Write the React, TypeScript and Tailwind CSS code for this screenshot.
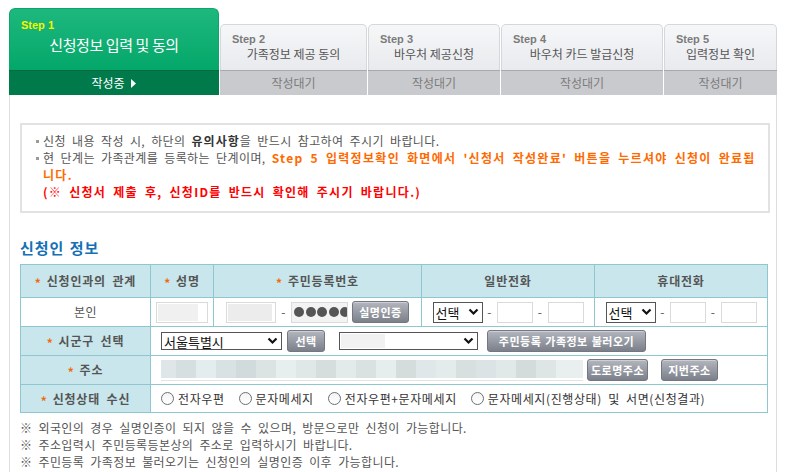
import React from "react";

const FONT = { fontFamily: '"Noto Sans CJK KR", "Noto Sans", sans-serif' };
const LATIN = { fontFamily: '"Liberation Sans", Arial, sans-serif' };

function Btn({ children, className = "" }: { children: React.ReactNode; className?: string }) {
  return (
    <span
      className={`inline-flex items-center justify-center rounded-[3px] border border-[#737780] bg-linear-to-b from-[#b3b6be] to-[#7c808a] text-white text-[11px] font-bold leading-none tracking-[0.5px] [word-spacing:1px] shadow-[inset_0_1px_0_rgba(255,255,255,0.35)] ${className}`}
    >
      {children}
    </span>
  );
}

function Chev() {
  return (
    <svg width="11" height="8" viewBox="0 0 11 8" className="shrink-0">
      <polyline points="1.5,1.5 5.5,5.5 9.5,1.5" fill="none" stroke="#111" strokeWidth="2.2" />
    </svg>
  );
}

function Sel({ text, className = "" }: { text: string; className?: string }) {
  return (
    <span
      className={`inline-flex items-center justify-between border border-[#555] bg-white pl-[2px] pr-[3px] text-[13px] leading-none text-[#111] tracking-normal ${className}`}
    >
      <span>{text}</span>
      <Chev />
    </span>
  );
}

function Inp({ className = "", children }: { className?: string; children?: React.ReactNode }) {
  return (
    <span className={`inline-flex items-center border border-[#dadada] bg-white overflow-hidden ${className}`}>
      {children}
    </span>
  );
}

function Star() {
  return <span className="text-[#f26a10] font-bold mr-[5px] relative top-[2px]">*</span>;
}

function Radio({ label }: { label: string }) {
  return (
    <span className="inline-flex items-center">
      <span className="w-[13px] h-[13px] rounded-full border border-[#6f6f6f] bg-linear-to-b from-[#f4f4f4] to-white" />
      <span className="ml-[4px] text-[12px] text-[#333] tracking-[0.6px]">{label}</span>
    </span>
  );
}

const mosaic: [number, string][] = [
  [15, "#dfe6e7"], [20, "#d6dfe0"], [20, "#e4eded"], [20, "#d9e2e2"], [20, "#d2dbdc"],
  [20, "#dbe3e3"], [20, "#e6eeee"], [20, "#dfe7e7"], [20, "#d5dddd"], [20, "#e2eaea"],
  [20, "#d9e1e1"], [20, "#e5eded"], [20, "#d4dcdc"], [20, "#dfe7e8"], [20, "#e3ebeb"],
  [20, "#d7dfdf"], [20, "#dbe3e4"], [20, "#e0e8e8"], [20, "#d3dbdb"], [20, "#dde5e5"], [27, "#e9efef"],
];

function Tab({
  step,
  title,
  w,
  active = false,
}: {
  step: string;
  title: string;
  w: string;
  active?: boolean;
}) {
  if (active) {
    return (
      <div className={`flex flex-col ${w}`}>
        <div className="h-[62px] rounded-t-[6px] border border-[#0ea56c] border-b-0 bg-linear-to-b from-[#1cb87e] to-[#03a769] pl-[11px] pt-[10px]">
          <div style={LATIN} className="text-[11px] font-bold leading-[13px] text-[#f5f500]">
            {step}
          </div>
          <div className="mt-[3px] pr-[11px] text-center text-[15px] leading-[20px] text-white tracking-[-0.4px]">
            {title}
          </div>
        </div>
        <div className="h-[25px] border-t border-[#00683f] bg-[#007a4b] flex items-center justify-center text-[12px] text-white">
          작성중
          <svg width="6" height="9" viewBox="0 0 6 9" className="ml-[6px]">
            <polygon points="0,0 5,4.5 0,9" fill="#fff" />
          </svg>
        </div>
      </div>
    );
  }
  return (
    <div className={`flex flex-col ${w}`}>
      <div className="h-[46px] rounded-t-[5px] border border-[#d6d7da] border-b-0 bg-linear-to-b from-[#f6f7f9] to-[#e9eaed] pl-[11px] pt-[8px]">
        <div style={LATIN} className="text-[11px] font-bold leading-[13px] text-[#7b7b7b]">
          {step}
        </div>
        <div className="pr-[11px] text-center text-[12px] leading-[16px] text-[#555]">{title}</div>
      </div>
      <div className="h-[25px] border-t border-[#a8a9ad] bg-[#c9cace] flex items-center justify-center text-[12px] text-[#7c7c7c]">
        작성대기
      </div>
    </div>
  );
}

function Dots() {
  return (
    <span className="flex items-center gap-[1.5px] pl-[2px]">
      {[0, 1, 2, 3, 4].map((i) => (
        <span key={i} className="w-[10px] h-[10px] rounded-full bg-[#555] shrink-0" />
      ))}
    </span>
  );
}

export default function App() {
  const th = "border border-[#8fc7d0] bg-[#c8e6ec] text-[12px] font-bold text-[#555] tracking-[0.8px] text-center p-0";
  const td = "border border-[#8fc7d0] bg-white p-0";
  const lab = "border border-[#8fc7d0] bg-[#c8e6ec] text-[12px] font-bold text-[#555] tracking-[0.8px] text-center p-0";
  return (
    <div style={FONT} className="w-[785px] h-[472px] overflow-hidden bg-white">
      {/* tabs */}
      <div className="flex items-end gap-[1px] pl-[9px] pt-[8px]">
        <Tab step="Step 1" title="신청정보 입력 및 동의" w="w-[210px]" active />
        <Tab step="Step 2" title="가족정보 제공 동의" w="w-[147px]" />
        <Tab step="Step 3" title="바우처 제공신청" w="w-[132px]" />
        <Tab step="Step 4" title="바우처 카드 발급신청" w="w-[162px]" />
        <Tab step="Step 5" title="입력정보 확인" w="w-[113px]" />
      </div>

      {/* content */}
      <div className="ml-[9px] w-[768px] h-[377px] border-l border-r border-[#dedede] pl-[10px] pt-[28px] tracking-[0.4px] [word-spacing:3px]">
        <div className="w-[750px] border-2 border-[#e2e2e2] pl-[14px] pt-[7px] pb-[11px] text-[12px] leading-[17px] text-[#555] whitespace-nowrap">
          <div className="flex">
            <span className="w-[3px] h-[3px] bg-[#9a9a9a] mt-[8px] mr-[4px] shrink-0" />
            <span>
              신청 내용 작성 시, 하단의 <b className="text-[#333] tracking-[1px]">유의사항</b>을 반드시 참고하여 주시기 바랍니다.
            </span>
          </div>
          <div className="flex">
            <span className="w-[3px] h-[3px] bg-[#9a9a9a] mt-[8px] mr-[4px] shrink-0" />
            <span>
              현 단계는 가족관계를 등록하는 단계이며,{" "}
              <b className="text-[#ff6a00] tracking-[1.3px]">
                Step 5 입력정보확인 화면에서 '신청서 작성완료' 버튼을 누르셔야 신청이 완료됩
                <br />
                니다.
              </b>
              <br />
              <b className="text-[#ff0000] tracking-[1.3px]">(※ 신청서 제출 후, 신청ID를 반드시 확인해 주시기 바랍니다.)</b>
            </span>
          </div>
        </div>

        <div className="mt-[25px] mb-[6px] text-[15px] leading-[20px] font-bold text-[#1670b5] tracking-[1px] [word-spacing:1px]">
          신청인 정보
        </div>

        <table className="w-[747px] table-fixed border-collapse">
          <colgroup>
            <col className="w-[130px]" />
            <col className="w-[63px]" />
            <col className="w-[208px]" />
            <col className="w-[173px]" />
            <col className="w-[173px]" />
          </colgroup>
          <tbody>
            <tr className="h-[33px]">
              <th className={th}>
                <Star />신청인과의 관계
              </th>
              <th className={th}>
                <Star />성명
              </th>
              <th className={th}>
                <Star />주민등록번호
              </th>
              <th className={th}>일반전화</th>
              <th className={th}>휴대전화</th>
            </tr>
            <tr className="h-[29px]">
              <td className={`${td} text-center text-[12px] text-[#555]`}>본인</td>
              <td className={td}>
                <div className="pl-[5px] flex items-center">
                  <Inp className="w-[52px] h-[21px]">
                    <span className="ml-[1px] w-[40px] h-[17px] bg-[#f0f0f0]" />
                  </Inp>
                </div>
              </td>
              <td className={td}>
                <div className="flex items-center justify-center">
                  <Inp className="w-[50px] h-[21px]">
                    <span className="ml-[1px] w-[44px] h-[17px] bg-[#ececec]" />
                  </Inp>
                  <span className="w-[15px] text-center text-[12px] text-[#555]">-</span>
                  <Inp className="w-[57px] h-[21px] !bg-[#f3f3f3]">
                    <Dots />
                  </Inp>
                  <Btn className="ml-[4px] w-[57px] h-[22px]">실명인증</Btn>
                </div>
              </td>
              <td className={td}>
                <div className="flex items-center justify-center">
                  <Sel text="선택" className="w-[50px] h-[21px]" />
                  <span className="w-[14px] text-center text-[12px] text-[#555]">-</span>
                  <Inp className="w-[36px] h-[21px]" />
                  <span className="w-[15px] text-center text-[12px] text-[#555]">-</span>
                  <Inp className="w-[36px] h-[21px]" />
                </div>
              </td>
              <td className={td}>
                <div className="flex items-center justify-center">
                  <Sel text="선택" className="w-[50px] h-[21px]" />
                  <span className="w-[14px] text-center text-[12px] text-[#555]">-</span>
                  <Inp className="w-[36px] h-[21px]" />
                  <span className="w-[15px] text-center text-[12px] text-[#555]">-</span>
                  <Inp className="w-[36px] h-[21px]" />
                </div>
              </td>
            </tr>
            <tr className="h-[29px]">
              <td className={lab}>
                <Star />시군구 선택
              </td>
              <td className={td} colSpan={4}>
                <div className="pl-[10px] flex items-center">
                  <Sel text="서울특별시" className="w-[121px] h-[18px]" />
                  <Btn className="ml-[5px] w-[38px] h-[22px]">선택</Btn>
                  <span className="ml-[14px] w-[139px] h-[18px] border border-[#555] flex items-center justify-between pr-[3px]">
                    <span className="ml-[1px] w-[44px] h-[14px] bg-[#f1f1f1]" />
                    <Chev />
                  </span>
                  <Btn className="ml-[9px] w-[159px] h-[22px]">주민등록 가족정보 불러오기</Btn>
                </div>
              </td>
            </tr>
            <tr className="h-[29px]">
              <td className={lab}>
                <Star />주소
              </td>
              <td className={td} colSpan={4}>
                <div className="pl-[10px] flex items-center">
                  <span className="w-[422px] h-[21px] flex flex-col border-b border-[#e3e3e3]">
                    <span className="flex h-[18px] overflow-hidden">
                      {mosaic.map(([w, c], i) => (
                        <span key={i} className="h-full shrink-0" style={{ width: w, background: c }} />
                      ))}
                    </span>
                  </span>
                  <Btn className="ml-[4px] w-[61px] h-[22px]">도로명주소</Btn>
                  <Btn className="ml-[13px] w-[57px] h-[22px]">지번주소</Btn>
                </div>
              </td>
            </tr>
            <tr className="h-[28px]">
              <td className={lab}>
                <Star />신청상태 수신
              </td>
              <td className={td} colSpan={4}>
                <div className="pl-[10px] flex items-center gap-[14px]">
                  <Radio label="전자우편" />
                  <Radio label="문자메세지" />
                  <Radio label="전자우편+문자메세지" />
                  <Radio label="문자메세지(진행상태) 및 서면(신청결과)" />
                </div>
              </td>
            </tr>
          </tbody>
        </table>

        <div className="mt-[6px] text-[12px] leading-[17px] text-[#555]">
          <div>※ 외국인의 경우 실명인증이 되지 않을 수 있으며, 방문으로만 신청이 가능합니다.</div>
          <div>※ 주소입력시 주민등록등본상의 주소로 입력하시기 바랍니다.</div>
          <div>※ 주민등록 가족정보 불러오기는 신청인의 실명인증 이후 가능합니다.</div>
        </div>
      </div>
    </div>
  );
}
